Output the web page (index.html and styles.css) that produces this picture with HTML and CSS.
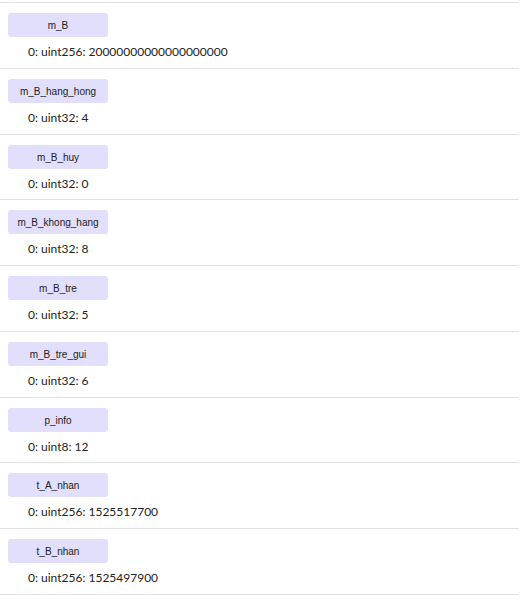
FILE: index.html
```html
<!DOCTYPE html>
<html>
<head>
<meta charset="utf-8">
<link rel="stylesheet" href="styles.css">
</head>
<body>
<div class="list">
  <div class="row"><div class="label">m_B</div><div class="value">0: uint256: 20000000000000000000</div></div>
  <div class="row"><div class="label">m_B_hang_hong</div><div class="value">0: uint32: 4</div></div>
  <div class="row"><div class="label">m_B_huy</div><div class="value">0: uint32: 0</div></div>
  <div class="row"><div class="label">m_B_khong_hang</div><div class="value">0: uint32: 8</div></div>
  <div class="row"><div class="label">m_B_tre</div><div class="value">0: uint32: 5</div></div>
  <div class="row"><div class="label">m_B_tre_gui</div><div class="value">0: uint32: 6</div></div>
  <div class="row"><div class="label">p_info</div><div class="value">0: uint8: 12</div></div>
  <div class="row"><div class="label">t_A_nhan</div><div class="value">0: uint256: 1525517700</div></div>
  <div class="row"><div class="label">t_B_nhan</div><div class="value">0: uint256: 1525497900</div></div>
</div>
</body>
</html>
```
FILE: styles.css
```css
html, body {
  margin: 0;
  padding: 0;
  background: #fff;
}
body {
  padding-top: 2px;
  font-family: Lato, "Liberation Sans", sans-serif;
  color: #222;
}
.list {
  margin-right: 1px;
  border-bottom: 1px solid #e0e0e0;
}
.row {
  border-top: 1px solid #e0e0e0;
  padding: 10px 8px 5.78px;
}
.label {
  width: 100px;
  height: 24px;
  line-height: 26px;
  background: #e1dffb;
  border-radius: 3px;
  text-align: center;
  font-family: "Liberation Sans", Arial, sans-serif;
  font-size: 10px;
  color: #222;
}
.value {
  margin-top: 5px;
  height: 20px;
  line-height: 20px;
  padding-left: 20px;
  font-size: 12px;
}
```
